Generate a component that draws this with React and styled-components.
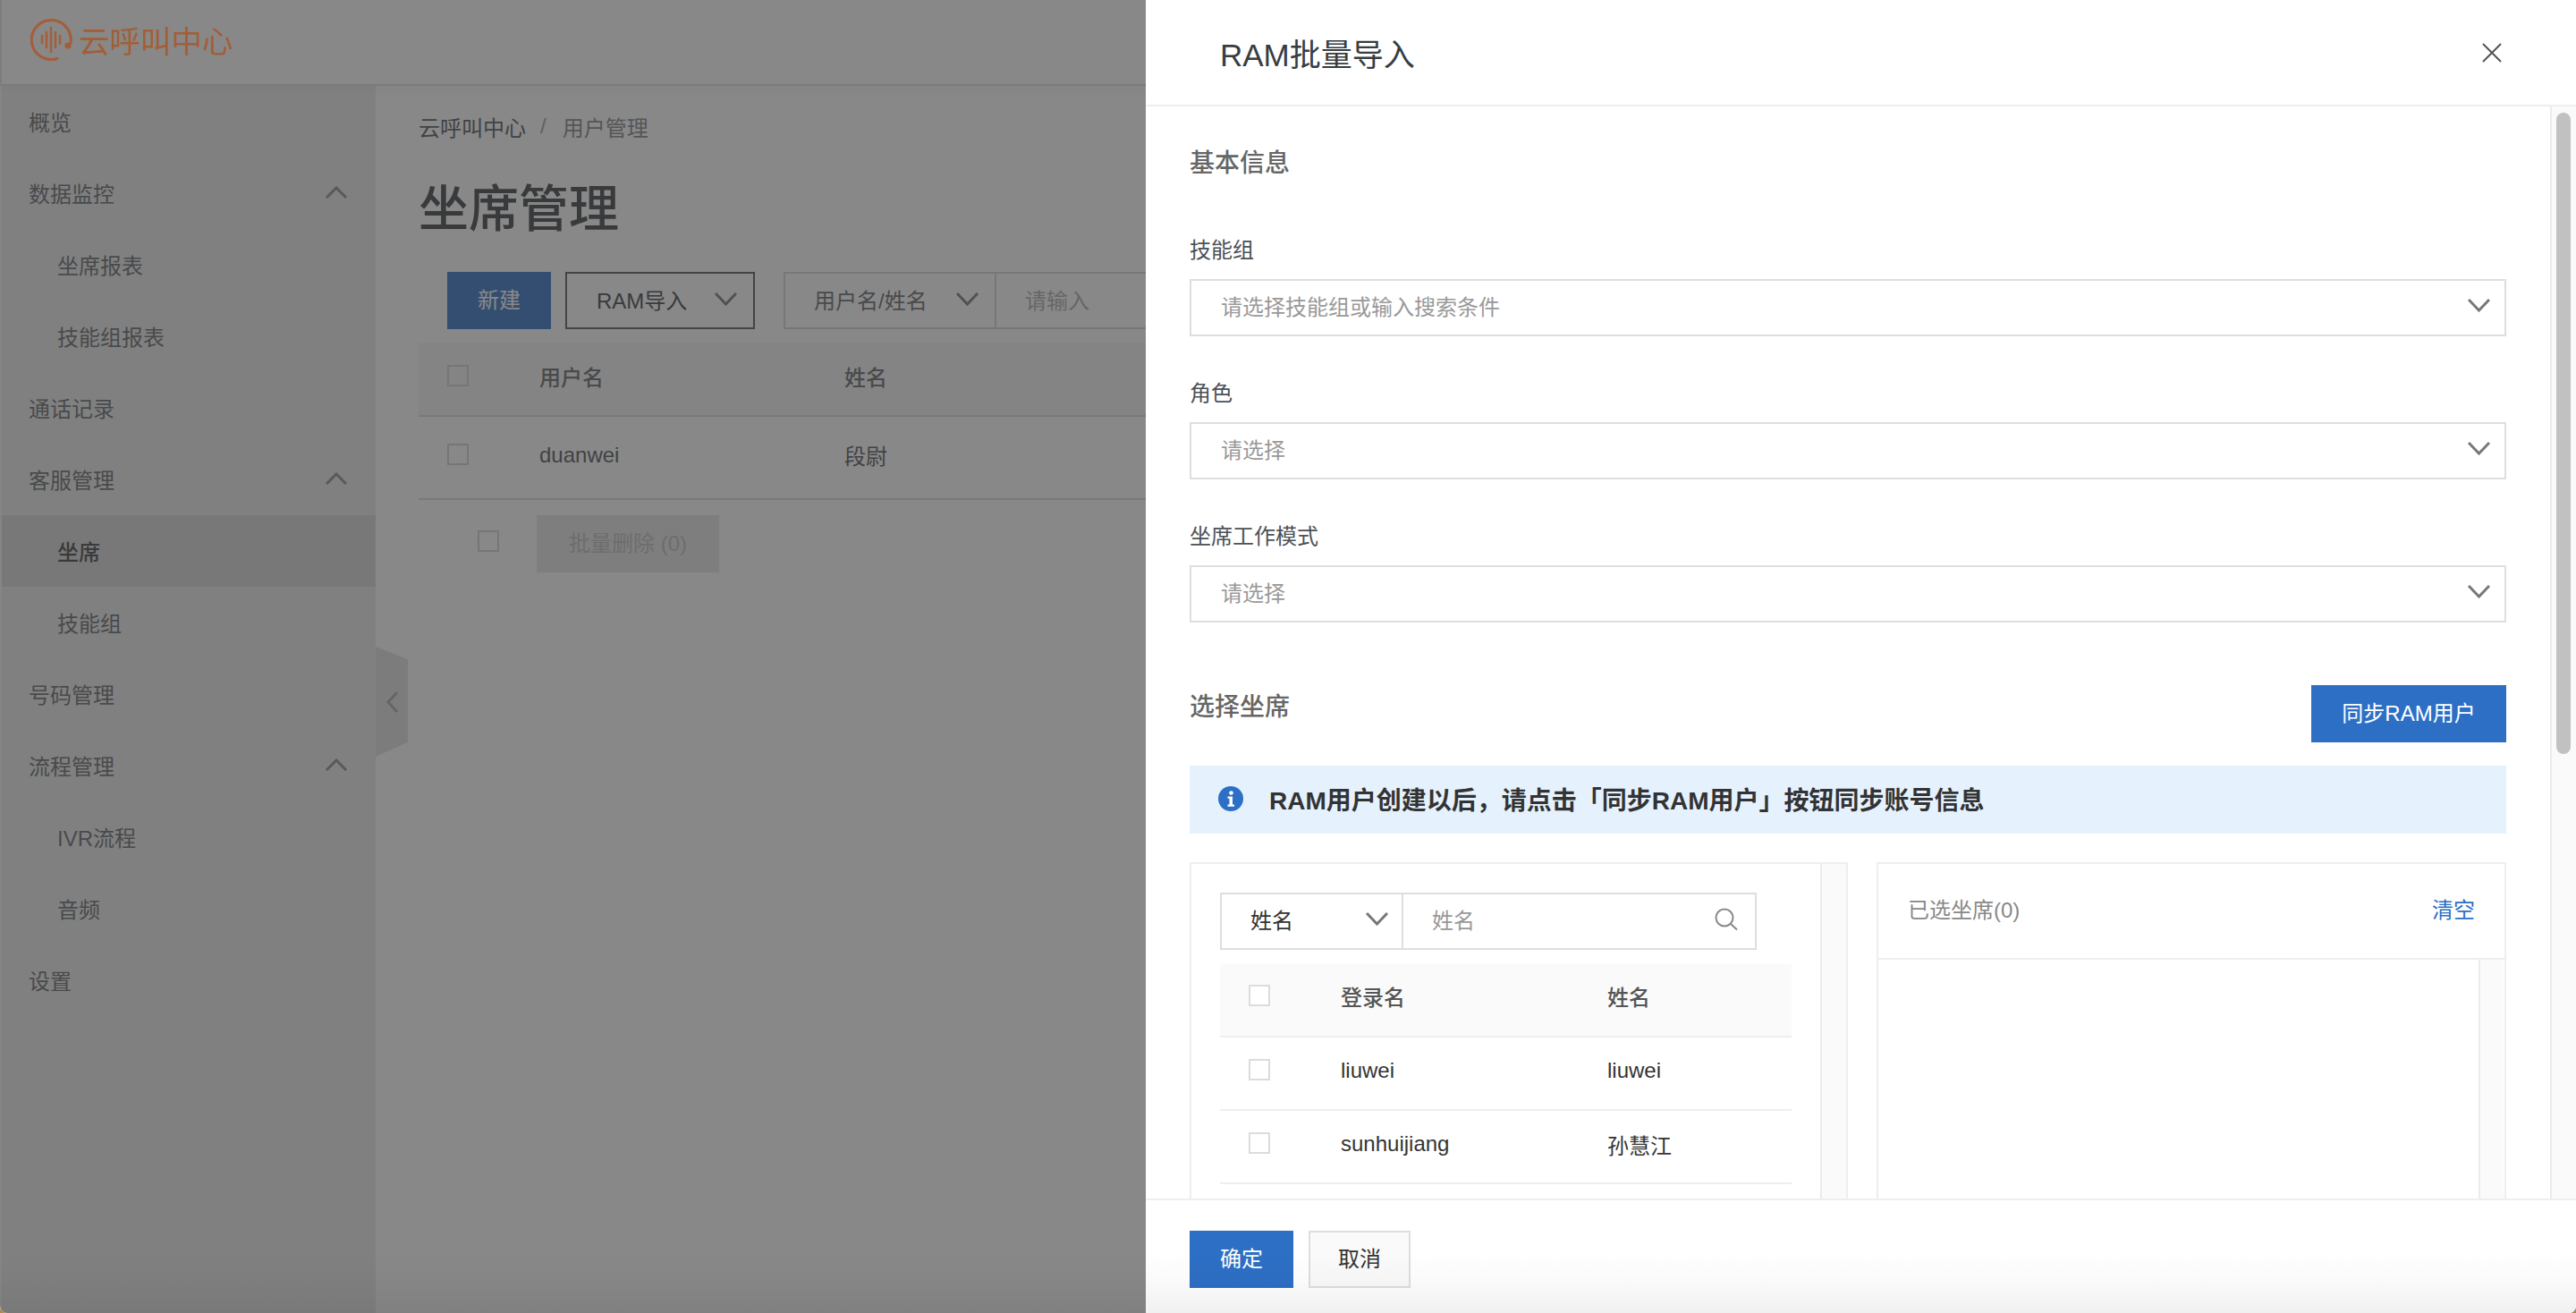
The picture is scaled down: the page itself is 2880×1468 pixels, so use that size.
import styled, { createGlobalStyle } from 'styled-components';

const GlobalStyle = createGlobalStyle`
	html, body {
		margin: 0;
		padding: 0;
		background: #b08a4a;
	}

	* {
		box-sizing: border-box;
	}

	body {
		font-family: "Liberation Sans", "Noto Sans CJK SC", sans-serif;
		font-size: 24px;
		color: #373d41;
	}
`;

const Screen = styled.div`
	position: relative;
	width: 2880px;
	height: 1468px;
	overflow: hidden;
	border-radius: 0 0 8px 8px;
	background: #fff;

	&::after {
		content: "";
		position: absolute;
		z-index: 4;
		left: 0;
		right: 0;
		bottom: 0;
		height: 70px;
		background: linear-gradient(to bottom, rgba(0, 0, 0, 0), rgba(0, 0, 0, 0.02) 50%, rgba(0, 0, 0, 0.06));
	}
`;

const TopBar = styled.header`
	position: relative;
	display: flex;
	align-items: center;
	gap: 6px;
	height: 96px;
	padding: 0 0 6px 32px;
	border-left: 2px solid #e4e4e4;
	border-bottom: 2px solid #dcdcdc;
	background: #fff;
	box-shadow: 0 2px 14px rgba(0, 0, 0, 0.06);
`;

const LogoMark = styled.svg`
	position: relative;
	z-index: 3;
	flex: none;
`;

const LogoText = styled.span`
	position: relative;
	z-index: 3;
	font-size: 34.5px;
	color: #a35e38;
`;

const Main = styled.div`
	display: flex;
	height: 1372px;
`;

const Sidebar = styled.nav`
	width: 420px;
	flex: none;
	border-left: 2px solid #f8f8f8;
	background: #ececec;
`;

const NavRow = styled.div`
	display: flex;
	align-items: center;
	justify-content: space-between;
	height: 80px;
	padding: 0 32px 2px ${(p) => (p.$child ? '62px' : '30px')};
	color: ${(p) => (p.$active ? '#373d41' : '#5f6468')};
	background: ${(p) => (p.$active ? '#d8d8d8' : 'transparent')};
	font-weight: ${(p) => (p.$active ? 500 : 400)};
`;

const Content = styled.main`
	flex: 1;
	padding: 25px 0 0 48px;
`;

const Breadcrumb = styled.div`
	display: flex;
	align-items: center;
	height: 40px;
	color: #4b5156;
`;

const Slash = styled.span`
	margin: 0 18px 0 16px;
	color: #999;
`;

const Muted = styled.span`
	color: #7d8286;
`;

const PageTitle = styled.h1`
	height: 64px;
	margin: 39px 0 0;
	font-size: 56px;
	line-height: 68px;
	font-weight: 500;
	color: #373d41;
`;

const Toolbar = styled.div`
	display: flex;
	height: 64px;
	margin: 40px 0 0 32px;
`;

const PrimaryButton = styled.button`
	display: flex;
	align-items: center;
	justify-content: center;
	width: ${(p) => p.$width};
	height: 64px;
	padding: 0 0 5px;
	border: none;
	background: #2d6fc5;
	color: #fff;
	font: inherit;
`;

const RamButton = styled.div`
	display: flex;
	align-items: center;
	justify-content: space-between;
	width: 212px;
	height: 64px;
	margin-left: 16px;
	padding: 0 18px 4px 33px;
	border: 2px solid #555;
	color: #373d41;
`;

const FilterGroup = styled.div`
	display: flex;
	height: 64px;
	width: 640px;
	margin-left: 32px;
	border: 2px solid #d4d4d4;
`;

const FilterSelect = styled.div`
	display: flex;
	align-items: center;
	justify-content: space-between;
	width: 236px;
	padding: 0 18px 4px 32px;
	border-right: 2px solid #d4d4d4;
	color: #5f6468;
`;

const FilterInput = styled.div`
	display: flex;
	align-items: center;
	padding: 0 0 4px 32px;
	color: #aaa;
`;

const PageTable = styled.div`
	margin-top: 15px;
`;

const PageRow = styled.div`
	display: flex;
	align-items: center;
	height: ${(p) => (p.$head ? '83px' : '93px')};
	padding: 0 0 6px 32px;
	border-bottom: 2px solid #dadada;
	background: ${(p) => (p.$head ? '#f6f6f6' : 'transparent')};
	color: ${(p) => (p.$head ? '#5f6468' : '#4b5156')};
	font-weight: ${(p) => (p.$head ? 500 : 400)};
`;

const PageCheckCell = styled.div`
	width: 103px;
	flex: none;
	display: flex;
	margin-top: -2px;
`;

const PageCell = styled.div`
	width: 341px;
	flex: none;
`;

const BulkBar = styled.div`
	display: flex;
	align-items: flex-start;
	margin: 17px 0 0 66px;
`;

const BulkCheck = styled.div`
	margin: 17px 42px 0 0;
`;

const DisabledButton = styled.div`
	display: flex;
	align-items: center;
	justify-content: center;
	width: 204px;
	height: 64px;
	padding-bottom: 5px;
	background: #e6e6e6;
	color: #bbb;
`;

const Check = styled.span`
	display: block;
	width: 24px;
	height: 24px;
	border: 2px solid ${(p) => (p.$dim ? '#d2d2d2' : '#dcdcdc')};
	background: ${(p) => (p.$dim ? 'transparent' : '#fff')};
`;

const CollapseHandle = styled.div`
	position: absolute;
	left: 420px;
	top: 723px;
	display: flex;
	align-items: center;
	width: 36px;
	height: 123px;
	padding-left: 12px;
	background: #e2e2e2;
	clip-path: polygon(0 0, 100% 14px, 100% 107px, 0 100%);
`;

const Mask = styled.div`
	position: absolute;
	inset: 0;
	z-index: 2;
	background: rgba(57, 57, 57, 0.6);
`;

const Drawer = styled.aside`
	position: absolute;
	z-index: 3;
	top: 0;
	right: 0;
	bottom: 0;
	display: flex;
	flex-direction: column;
	width: 1599px;
	background: #fff;
`;

const DrawerHead = styled.div`
	display: flex;
	align-items: center;
	justify-content: space-between;
	height: 119px;
	flex: none;
	padding: 0 83px 0 83px;
	border-bottom: 2px solid #eee;
`;

const DrawerTitle = styled.h2`
	margin: 0;
	font-size: 35px;
	font-weight: 400;
	color: #373d41;
`;

const DrawerBody = styled.div`
	display: flex;
	flex: 1;
	min-height: 0;
`;

const FormArea = styled.div`
	flex: 1;
	min-width: 0;
	overflow: hidden;
	padding: 43px 49px 0 49px;
`;

const ScrollTrack = styled.div`
	flex: none;
	width: ${(p) => p.$width || '29px'};
	border-left: 2px solid #ebebeb;
	background: #fafafa;
`;

const ScrollThumb = styled.div`
	width: 16px;
	height: 717px;
	margin: 7px 0 0 5px;
	border-radius: 8px;
	background: #c1c1c1;
`;

const SectionTitle = styled.div`
	height: 40px;
	font-size: 28px;
	line-height: 42px;
	color: #666;
	font-weight: 500;
`;

const FieldLabel = styled.div`
	height: 36px;
	margin-top: ${(p) => p.$top};
	line-height: 36px;
	color: #4b5156;
`;

const Select = styled.div`
	display: flex;
	align-items: center;
	justify-content: space-between;
	height: 64px;
	margin-top: 14px;
	padding: 0 16px 5px 33px;
	border: 2px solid #dedede;
	color: #999;
`;

const SectionRow = styled.div`
	display: flex;
	justify-content: space-between;
	margin-top: 70px;
`;

const SectionOffset = styled.div`
	padding-top: 4px;
`;

const Notice = styled.div`
	display: flex;
	align-items: center;
	gap: 29px;
	height: 76px;
	margin-top: 26px;
	padding: 0 0 3px 32px;
	background: #e5f2fe;
	font-size: 28px;
	font-weight: 700;
	color: #333;
`;

const Panels = styled.div`
	display: flex;
	gap: 32px;
	height: 600px;
	margin-top: 32px;
`;

const SourcePanel = styled.div`
	display: flex;
	width: 736px;
	flex: none;
	border: 2px solid #eee;
`;

const SourceInner = styled.div`
	flex: 1;
	padding: 32px 32px 0;
`;

const SearchBox = styled.div`
	display: flex;
	width: 600px;
	height: 64px;
	border: 2px solid #dedede;
`;

const SearchSelect = styled.div`
	display: flex;
	align-items: center;
	justify-content: space-between;
	width: 203px;
	flex: none;
	padding: 0 15px 5px 32px;
	border-right: 2px solid #dedede;
	color: #333;
`;

const SearchInput = styled.div`
	display: flex;
	align-items: center;
	justify-content: space-between;
	flex: 1;
	padding: 0 19px 5px 32px;
	color: #999;
`;

const UserTable = styled.div`
	margin-top: 16px;
`;

const UserRow = styled.div`
	display: flex;
	align-items: center;
	height: 82px;
	padding: 0 0 ${(p) => (p.$head ? '9px' : '6px')} 32px;
	border-bottom: 2px solid #eee;
	background: ${(p) => (p.$head ? '#fafafa' : '#fff')};
	color: ${(p) => (p.$head ? '#555' : '#333')};
	font-weight: ${(p) => (p.$head ? 500 : 400)};
`;

const UserCheckCell = styled.div`
	width: 103px;
	flex: none;
	margin-top: -2px;
`;

const LoginCell = styled.div`
	width: 298px;
	flex: none;
`;

const ResultPanel = styled.div`
	display: flex;
	flex-direction: column;
	flex: 1;
	border: 2px solid #eee;
`;

const ResultHead = styled.div`
	display: flex;
	align-items: center;
	justify-content: space-between;
	height: 107px;
	flex: none;
	padding: 0 33px 6px;
	border-bottom: 2px solid #eee;
	color: #888;
`;

const TextLink = styled.span`
	color: #2d6fc5;
`;

const ResultBody = styled.div`
	display: flex;
	justify-content: flex-end;
	flex: 1;
	padding-right: 1px;
`;

const DrawerFoot = styled.div`
	display: flex;
	gap: 17px;
	height: 128px;
	flex: none;
	padding: 34px 0 0 49px;
	border-top: 2px solid #eee;
	background: #fff;
`;

const CancelButton = styled.button`
	width: 114px;
	height: 64px;
	padding: 0 0 5px;
	border: 2px solid #dedede;
	background: #fafafa;
	color: #333;
	font: inherit;
`;

const ChevronSvg = styled.svg`
	display: block;
	flex: none;
	fill: none;
	stroke: ${(p) => p.$color || '#777'};
	stroke-width: ${(p) => p.$weight || 3};
`;

const Chevron = ({ dir = 'down', color, weight }) => {
	if (dir === 'up') {
		return (
			<ChevronSvg width="24" height="14" viewBox="0 0 24 14" $color={color} $weight={weight}>
				<path d="M1 13 12 2l11 11" />
			</ChevronSvg>
		);
	}
	if (dir === 'left') {
		return (
			<ChevronSvg width="13" height="24" viewBox="0 0 13 24" $color={color} $weight={weight}>
				<path d="M12 1 2 12l10 11" />
			</ChevronSvg>
		);
	}
	return (
		<ChevronSvg width="25" height="15" viewBox="0 0 25 15" $color={color} $weight={weight}>
			<path d="M1 1l11.5 12L24 1" />
		</ChevronSvg>
	);
};

const Logo = () => (
	<LogoMark width="48" height="47" viewBox="0 0 48 47">
		<g fill="none" stroke="#a35e38" strokeWidth="3" strokeLinecap="round">
			<path d="M30 44.5A22 22 0 1 1 45 27" />
			<path d="M13 19v8M18 15v17M23 10v27M28 15v17M33 19v9" strokeWidth="2.4" />
		</g>
		<circle cx="42" cy="30" r="3.6" fill="#a35e38" />
	</LogoMark>
);

const CloseIcon = () => (
	<svg width="22" height="22" viewBox="0 0 22 22" fill="none" stroke="#555" strokeWidth="2">
		<path d="M1 1l20 20M21 1 1 21" />
	</svg>
);

const SearchIcon = () => (
	<svg width="26" height="25" viewBox="0 0 26 25" fill="none" stroke="#888" strokeWidth="2">
		<circle cx="11" cy="11" r="9.5" />
		<path d="M18 18l7 6.5" />
	</svg>
);

const InfoIcon = () => (
	<svg width="28" height="28" viewBox="0 0 28 28" style={{ flex: 'none' }}>
		<circle cx="14" cy="14" r="14" fill="#2d6fc5" />
		<circle cx="14.5" cy="7.5" r="2.3" fill="#fff" />
		<path d="M10.5 11.5h5.5v9h2v2.2h-7.5v-2.2h2v-6.8h-2z" fill="#fff" />
	</svg>
);

const navItems = [
	{ label: '概览' },
	{ label: '数据监控', open: true },
	{ label: '坐席报表', child: true },
	{ label: '技能组报表', child: true },
	{ label: '通话记录' },
	{ label: '客服管理', open: true },
	{ label: '坐席', child: true, active: true },
	{ label: '技能组', child: true },
	{ label: '号码管理' },
	{ label: '流程管理', open: true },
	{ label: 'IVR流程', child: true },
	{ label: '音频', child: true },
	{ label: '设置' },
];

const fields = [
	{ label: '技能组', top: '60px', hint: '请选择技能组或输入搜索条件' },
	{ label: '角色', top: '46px', hint: '请选择' },
	{ label: '坐席工作模式', top: '46px', hint: '请选择' },
];

const users = [
	{ login: 'liuwei', name: 'liuwei' },
	{ login: 'sunhuijiang', name: '孙慧江' },
];

export default function App() {
	return (
		<Screen>
			<GlobalStyle />
			<TopBar>
				<Logo />
				<LogoText>云呼叫中心</LogoText>
			</TopBar>
			<Main>
				<Sidebar>
					{navItems.map((item) => (
						<NavRow key={item.label} $child={item.child} $active={item.active}>
							{item.label}
							{item.open && <Chevron dir="up" color="#8a8a8a" />}
						</NavRow>
					))}
				</Sidebar>
				<Content>
					<Breadcrumb>
						云呼叫中心<Slash>/</Slash><Muted>用户管理</Muted>
					</Breadcrumb>
					<PageTitle>坐席管理</PageTitle>
					<Toolbar>
						<PrimaryButton $width="116px">新建</PrimaryButton>
						<RamButton>RAM导入<Chevron color="#777" /></RamButton>
						<FilterGroup>
							<FilterSelect>用户名/姓名<Chevron color="#777" /></FilterSelect>
							<FilterInput>请输入</FilterInput>
						</FilterGroup>
					</Toolbar>
					<PageTable>
						<PageRow $head>
							<PageCheckCell><Check $dim /></PageCheckCell>
							<PageCell>用户名</PageCell>
							<PageCell>姓名</PageCell>
						</PageRow>
						<PageRow>
							<PageCheckCell><Check $dim /></PageCheckCell>
							<PageCell>duanwei</PageCell>
							<PageCell>段尉</PageCell>
						</PageRow>
					</PageTable>
					<BulkBar>
						<BulkCheck><Check $dim /></BulkCheck>
						<DisabledButton>批量删除 (0)</DisabledButton>
					</BulkBar>
				</Content>
			</Main>
			<CollapseHandle><Chevron dir="left" color="#a8a8a8" /></CollapseHandle>
			<Mask />
			<Drawer>
				<DrawerHead>
					<DrawerTitle>RAM批量导入</DrawerTitle>
					<CloseIcon />
				</DrawerHead>
				<DrawerBody>
					<FormArea>
						<SectionTitle>基本信息</SectionTitle>
						{fields.map((field) => (
							<div key={field.label}>
								<FieldLabel $top={field.top}>{field.label}</FieldLabel>
								<Select>{field.hint}<Chevron /></Select>
							</div>
						))}
						<SectionRow>
							<SectionOffset><SectionTitle>选择坐席</SectionTitle></SectionOffset>
							<PrimaryButton $width="218px">同步RAM用户</PrimaryButton>
						</SectionRow>
						<Notice>
							<InfoIcon />
							RAM用户创建以后，请点击「同步RAM用户」按钮同步账号信息
						</Notice>
						<Panels>
							<SourcePanel>
								<SourceInner>
									<SearchBox>
										<SearchSelect>姓名<Chevron /></SearchSelect>
										<SearchInput>姓名<SearchIcon /></SearchInput>
									</SearchBox>
									<UserTable>
										<UserRow $head>
											<UserCheckCell><Check /></UserCheckCell>
											<LoginCell>登录名</LoginCell>
											<div>姓名</div>
										</UserRow>
										{users.map((user) => (
											<UserRow key={user.login}>
												<UserCheckCell><Check /></UserCheckCell>
												<LoginCell>{user.login}</LoginCell>
												<div>{user.name}</div>
											</UserRow>
										))}
									</UserTable>
								</SourceInner>
								<ScrollTrack />
							</SourcePanel>
							<ResultPanel>
								<ResultHead>
									已选坐席(0)
									<TextLink>清空</TextLink>
								</ResultHead>
								<ResultBody><ScrollTrack $width="28px" /></ResultBody>
							</ResultPanel>
						</Panels>
					</FormArea>
					<ScrollTrack><ScrollThumb /></ScrollTrack>
				</DrawerBody>
				<DrawerFoot>
					<PrimaryButton $width="116px">确定</PrimaryButton>
					<CancelButton>取消</CancelButton>
				</DrawerFoot>
			</Drawer>
		</Screen>
	);
}
